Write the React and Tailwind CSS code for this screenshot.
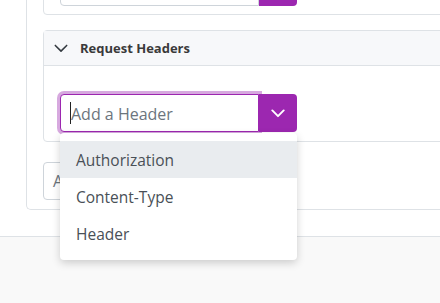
import React from "react";

function Chevron({ className, stroke = "currentColor", w = 2 }) {
  return (
    <svg viewBox="0 0 16 10" className={className} fill="none" stroke={stroke} strokeWidth={w} strokeLinecap="round" strokeLinejoin="round">
      <polyline points="1.5,1.5 8,8 14.5,1.5" />
    </svg>
  );
}

function InputGroup({ focused, placeholder }) {
  return (
    <div className="flex h-[38px] w-[237px]">
      <div
        className={
          focused
            ? "relative flex items-center w-[199px] h-[38px] bg-white border border-[#9c27b0] rounded-l-[4px] shadow-[0_0_0_3px_rgba(156,39,176,0.4)] pl-[9px]"
            : "relative flex items-center w-[199px] h-[38px] bg-white border border-[#ced4da] rounded-l-[4px] pl-[9px]"
        }
      >
        {focused && <span className="w-px h-[22px] bg-[#222]" />}
        <span className="text-[16px] text-[#6c757d] leading-none pt-[1px]">{placeholder}</span>
      </div>
      <div className="relative z-10 flex items-center justify-center w-[38px] h-[38px] bg-[#9c27b0] rounded-r-[4px]">
        <Chevron className="w-[14px] h-[9px]" stroke="#ffffff" w={2.2} />
      </div>
    </div>
  );
}

export default function App() {
  return (
    <div className="relative w-[440px] h-[303px] overflow-hidden bg-[#f9f9f9] font-['Open_Sans','Noto_Sans',sans-serif]">
      <div className="flow-root h-[237px] bg-white border-b border-[#dee2e6] pl-[26px]">
        <div className="-mt-[41px] w-[480px] border-l border-b border-[#dee2e6] rounded-bl-[5px] pl-[16px] pb-[9px]">
          <div className="border border-[#dee2e6] rounded-[4px] pt-[8px] pb-[8px] pl-[16px]">
            <InputGroup placeholder="" />
          </div>
          <div className="mt-[15px] border border-[#dee2e6] rounded-[4px]">
            <div className="h-[35px] bg-[#f7f8fa] border-b border-[#dee2e6] flex items-center pl-[10px] gap-[12px]">
              <Chevron className="w-[14px] h-[9px] text-[#343a40]" w={1.8} />
              <span className="text-[13px] font-bold text-[#3a3a3a] pt-[1px]">Request Headers</span>
            </div>
            <div className="pt-[28px] pb-[9px] pl-[16px]">
              <div className="relative w-[237px]">
                <InputGroup focused placeholder="Add a Header" />
                <div className="absolute left-0 top-[39px] z-20 w-[237px] bg-white rounded-[4px] shadow-[0_3px_8px_rgba(0,0,0,0.18)] py-[8px]">
                  <div className="h-[37px] flex items-center pl-[16px] pt-[2px] bg-[#e9ecef] text-[15.5px] text-[#495057]">Authorization</div>
                  <div className="h-[37px] flex items-center pl-[16px] pt-[2px] text-[15.5px] text-[#495057]">Content-Type</div>
                  <div className="h-[37px] flex items-center pl-[16px] pt-[2px] text-[15.5px] text-[#495057]">Header</div>
                </div>
              </div>
            </div>
          </div>
          <div className="mt-[20px] h-[38px] w-[220px] border border-[#ced4da] rounded-[4px] flex items-center pl-[9px]">
            <span className="text-[16px] text-[#6c757d]">Add a Parameter</span>
          </div>
        </div>
      </div>
    </div>
  );
}
